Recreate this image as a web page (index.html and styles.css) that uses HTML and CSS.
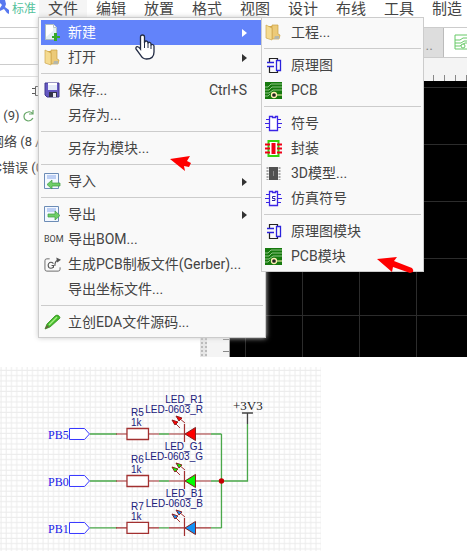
FILE: index.html
```html
<!DOCTYPE html>
<html lang="zh-CN">
<head>
<meta charset="utf-8">
<title>立创EDA</title>
<link rel="stylesheet" href="styles.css">
</head>
<body>
<svg class="defs" aria-hidden="true">
  <defs>
    <symbol id="i-new" viewBox="0 0 17 17">
      <path d="M1.500 .5h8l3 3v12h-11z" fill="#e4eff2" stroke="#aebdc2"/><path d="M2 1h7v6L2 13z" fill="#fff"/><path d="M9.500 .5v3h3" fill="#fff" stroke="#b9c5c9"/>
      <path d="M10 9h3v3h3v2h-3v3h-3v-3H8v-2h2z" fill="#35a927"/>
    </symbol>
    <symbol id="i-folder" viewBox="0 0 17 17">
      <path d="M1 2h8v12H1z" fill="#d6a64b"/><path d="M7 1h6v9l2 1-1 4H7z" fill="#ecca78" stroke="#caa044" stroke-width=".7"/><path d="M1 1l6 3v12l-6-2z" fill="#f5db91" stroke="#cda84f" stroke-width=".7"/><path d="M10 12h4v3h-5z" fill="#b5b7aa"/>
    </symbol>
    <symbol id="i-save" viewBox="0 0 17 17">
      <path d="M1 1h14v14H3l-2-2z" fill="#6558c2" stroke="#41388e"/><path d="M4 1h9v7H4z" fill="#e4eaf8"/><path d="M4 1h9v2H4z" fill="#fff"/><path d="M5 10h8v5H5z" fill="#343449"/><path d="M9 11h3v4H9z" fill="#e9e9f2"/>
    </symbol>
    <symbol id="i-import" viewBox="0 0 17 17">
      <path d="M.5.5h14v15H.5z" fill="#f3f8ff" stroke="#6c8cb6"/><path d="M3 3h9M3 5h9" stroke="#86a6e9"/><path d="M3 11.500l5-4.500v3h8v3H8v3z" fill="#6fce68" stroke="#3e9c40" stroke-width=".7"/>
    </symbol>
    <symbol id="i-export" viewBox="0 0 17 17">
      <path d="M.5.5h14v15H.5z" fill="#f3f8ff" stroke="#6c8cb6"/><path d="M3 3h9M3 5h9" stroke="#86a6e9"/><path d="M16 9.500L11 5v3H4v3h7v3z" fill="#6fce68" stroke="#3e9c40" stroke-width=".7"/>
    </symbol>
    <symbol id="i-gerber" viewBox="0 0 18 17">
      <path d="M6 2.500H3Q1 2.500 1 4.500v9q0 2 2 2h12q2 0 2-2v-2" fill="none" stroke="#666"/><path d="M10 7.500Q8 5.500 6 6.500 3.500 8 5 11.500q2 2 5 0V9.500H8M11.500 10q0-5 3-6" fill="none" stroke="#555" stroke-width="1.200"/><path d="M13 1l5 2.500-4 3z" fill="#555"/>
    </symbol>
    <symbol id="i-pencil" viewBox="0 0 17 17">
      <path d="M1 15l2-5 8-8q2-2 4 0t0 3l-9 8z" fill="#45bd2b" stroke="#338d20" stroke-width=".8"/><path d="M5 11l8-8" stroke="#a5ed83" stroke-width="1.500"/><path d="M1 15l2-4 2 2z" fill="#686040"/>
    </symbol>
    <symbol id="i-sch" viewBox="0 0 17 17">
      <path d="M4.500 5V1.500h8V3M4.500 10v5.500h8V14" fill="none" stroke="#222" stroke-width="1.200"/><path d="M2 5.500h7M2 9.500h7M11.500 3.500h4v10h-4z" fill="none" stroke="#2b22dc" stroke-width="1.300"/>
    </symbol>
    <symbol id="i-pcb" viewBox="0 0 17 17">
      <path d="M0 0h17v17H0z" fill="#16790e"/><path d="M0 5h3l3-3h11M0 8h4l3-3h10M0 11h4l4-3h9M0 14h3l2-2" fill="none" stroke="#a9d5a0" stroke-width=".8"/><circle cx="9" cy="13" r="2.500" fill="#222" stroke="#fff3b4" stroke-width="1.300"/><path d="M12 13h5" stroke="#fff3b4"/>
    </symbol>
    <symbol id="i-sym" viewBox="0 0 17 17">
      <path d="M4.500 1.500h3v1h3v-1h2v14h-8z" fill="#fff" stroke="#3b25e6" stroke-width="1.300"/><path d="M1 4.500h4M0 8.500h5M1 12.500h4M12 4.500h4M12 8.500h5M12 12.500h4" stroke="#3b25e6" stroke-width="1.200"/>
    </symbol>
    <symbol id="i-sim" viewBox="0 0 17 17">
      <use href="#i-sym" width="17" height="17"/><path d="M10.500 6.500h-3v2h2.500v2H7" fill="none" stroke="#2b22a8"/>
    </symbol>
    <symbol id="i-foot" viewBox="0 0 17 17">
      <path d="M3.500 1h10v15h-10z" fill="#fff" stroke="#35d210" stroke-width="2"/><path d="M6.500 3h4v11h-4z" fill="#f00018"/><path d="M0 4.500h5M0 8.500h5M0 12.500h5M12 4.500h5M12 8.500h5M12 12.500h5" stroke="#f00018" stroke-width="2"/>
    </symbol>
    <symbol id="i-3d" viewBox="0 0 17 17">
      <path d="M2.500 2v13M14.500 2v13" stroke="#aaa" stroke-width="2" stroke-dasharray="2 1"/><path d="M4 2h9v13H4z" fill="#505050"/><path d="M8.500 6v5" stroke="#888"/>
    </symbol>
    <g id="branch">
      <path d="M69.500-5.500h15l5 5.500-5 5.500h-15z" fill="#fff" stroke="#3535ff"/>
      <path d="M90 0h27M159 0h10M211 0h10.500" stroke="#4aa84a" stroke-width="1.300"/>
      <path d="M116 0h11M148 0h11M169 0h16M196 0h15M184.500-10V8" stroke="#a23030" stroke-width="1.200"/>
      <path d="M127-5.500h21.500v11H127z" fill="#fff" stroke="#a23030" stroke-width="1.300"/>
      <path d="M185 0l10.500-6.500v13z" stroke="#802020"/>
      <path d="M185-11l-6-5M180-6l-5-5" stroke="#a23030"/>
      <path d="M176-18l6 2-3 3zM172-14l6 2-3 3z" stroke="#8c2020"/>
    </g>
    <pattern id="grid" width="5.250" height="5.250" patternUnits="userSpaceOnUse"><path d="M1 0v5.250M0 3h5.250" stroke="#ececec" stroke-width="1"/></pattern>
  </defs>
</svg>

<main class="app">
  <nav class="menubar" aria-label="主菜单">
    <span class="brand"><svg class="logo" viewBox="0 0 9 15" aria-hidden="true"><path d="M0 0h5l1 4-1 3 4 3v4l-2-1-3-4-4 2V8l2-3-2-2z" fill="#5878ef"/></svg>标准</span>
    <button class="top open">文件</button><button class="top">编辑</button><button class="top">放置</button><button class="top">格式</button><button class="top">视图</button><button class="top">设计</button><button class="top">布线</button><button class="top">工具</button><button class="top">制造</button>
  </nav>

  <div class="workspace">
    <aside class="side">
      <div class="toolbar"></div>
      <input class="filter" type="text" aria-label="筛选">
      <div class="sidehead"><svg width="8" height="12" viewBox="0 0 8 12" aria-hidden="true"><path d="M7 1.500H3.500v9H7M0 3.500h3M0 8.500h3" stroke="#555" fill="none"/></svg></div>
      <ul class="tree">
        <li class="parts">元件 (9) <svg width="12" height="12" viewBox="0 0 12 12" aria-hidden="true"><path d="M10 4Q8 1 5 2 1 3 1 6.500T5 11q3 0 5-3M10 0v4H6" fill="none" stroke="#65a565" stroke-width="1.200"/></svg></li>
        <li class="nets">网络 (8 / 8)</li>
        <li class="drc">DRC错误 (0)</li>
      </ul>
    </aside>
    <div class="splitter"></div>
    <section class="editor">
      <div class="toolbar"></div>
      <div class="tabs"><span class="tab">..</span><span class="tab current"><svg width="24" height="16" viewBox="0 0 24 16" aria-hidden="true"><path d="M1 1h23M1 1v14h23M1 6h5l3-2h15M1 9h6l3-2h14M1 12h5l5-3h13" fill="none" stroke="#66c966"/><circle cx="9" cy="12" r="2" fill="#fff" stroke="#66c966"/></svg></span></div>
      <div class="hruler"></div>
      <div class="vruler"></div>
      <div class="board"></div>
    </section>
  </div>

  <ul class="menu file">
    <li><button class="active"><svg class="icon"><use href="#i-new"/></svg>新建<i class="more"></i></button></li>
    <li><button><svg class="icon"><use href="#i-folder"/></svg>打开<i class="more"></i></button></li>
    <li class="sep"></li>
    <li><button><svg class="icon"><use href="#i-save"/></svg>保存...<kbd>Ctrl+S</kbd></button></li>
    <li><button><span class="icon"></span>另存为...</button></li>
    <li class="sep"></li>
    <li><button><span class="icon"></span>另存为模块...</button></li>
    <li class="sep"></li>
    <li><button><svg class="icon"><use href="#i-import"/></svg>导入<i class="more"></i></button></li>
    <li class="sep"></li>
    <li><button><svg class="icon"><use href="#i-export"/></svg>导出<i class="more"></i></button></li>
    <li><button><span class="icon bom">BOM</span>导出BOM...</button></li>
    <li><button><svg class="icon"><use href="#i-gerber"/></svg>生成PCB制板文件(Gerber)...</button></li>
    <li><button><span class="icon"></span>导出坐标文件...</button></li>
    <li class="sep"></li>
    <li><button><svg class="icon"><use href="#i-pencil"/></svg>立创EDA文件源码...</button></li>
  </ul>

  <ul class="menu sub">
    <li><button><svg class="icon"><use href="#i-folder"/></svg>工程...</button></li>
    <li class="sep"></li>
    <li><button><svg class="icon"><use href="#i-sch"/></svg>原理图</button></li>
    <li><button><svg class="icon"><use href="#i-pcb"/></svg>PCB</button></li>
    <li class="sep"></li>
    <li><button><svg class="icon"><use href="#i-sym"/></svg>符号</button></li>
    <li><button><svg class="icon"><use href="#i-foot"/></svg>封装</button></li>
    <li><button><svg class="icon"><use href="#i-3d"/></svg>3D模型...</button></li>
    <li><button><svg class="icon"><use href="#i-sim"/></svg>仿真符号</button></li>
    <li class="sep"></li>
    <li><button><svg class="icon"><use href="#i-sch"/></svg>原理图模块</button></li>
    <li><button><svg class="icon"><use href="#i-pcb"/></svg>PCB模块</button></li>
  </ul>

  <svg class="cursor" viewBox="0 0 20 26" aria-hidden="true"><path d="M5.500 15V3q0-2 2-2t2 2v6q0-2 1.700-2t1.800 2v1q0-2 1.500-1.700T16 10v2q0-2 1.500-1.500T19 12v6q0 7-7.500 7-4 0-6-4L1 15q-.5-2 1-2.300t3.500 2.300z" fill="#fff" stroke="#222b44" stroke-width="1.300"/><path d="M9.500 9v5M13 10v4M16 12v3" stroke="#222b44"/></svg>
  <svg class="mark first" viewBox="0 0 21 16" aria-hidden="true"><path d="M0 3l20-3-3 5 4 2-2 4-5-1 1 5z" fill="#fe0000"/></svg>
  <svg class="mark second" viewBox="0 0 37 16" aria-hidden="true"><path d="M0 2l20-2-3 4 18 7q2 2 1 4l-3 1-17-6-1 5z" fill="#fe0000"/></svg>
</main>

<figure class="schematic">
  <svg viewBox="0 367 321 184" role="img" aria-label="LED 原理图">
    <rect x="0" y="367" width="321" height="184" fill="url(#grid)"/>
    <use href="#branch" y="434" fill="#f00"/>
    <use href="#branch" y="481" fill="#0f0"/>
    <use href="#branch" y="528" fill="#1492f5"/>
    <path d="M221.500 434v94M221.500 481h26v-57" fill="none" stroke="#4aa84a" stroke-width="1.300"/>
    <path d="M247.500 424v-11M242 413h11" stroke="#444" stroke-width="1.300"/>
    <circle cx="221.500" cy="481" r="2.700" fill="#c40000"/>
    <g class="port"><text x="48" y="439">PB5</text><text x="48" y="486">PB0</text><text x="48" y="533">PB1</text></g>
    <text class="power" x="233" y="410">+3V3</text>
    <g class="part">
      <text x="131" y="416">R5</text><text x="131" y="426">1k</text>
      <text x="131" y="463">R6</text><text x="131" y="473">1k</text>
      <text x="131" y="510">R7</text><text x="131" y="520">1k</text>
    </g>
    <g class="part end">
      <text x="203" y="403">LED_R1</text><text x="203" y="413">LED-0603_R</text>
      <text x="203" y="450">LED_G1</text><text x="203" y="460">LED-0603_G</text>
      <text x="203" y="497">LED_B1</text><text x="203" y="507">LED-0603_B</text>
    </g>
  </svg>
</figure>
</body>
</html>
```
FILE: styles.css
```css
* { box-sizing: border-box; }
body {
  margin: 0;
  background: #fff;
  color: #444;
  font: 14px/25px Roboto, "Noto Sans CJK SC", sans-serif;
}
ul { list-style: none; margin: 0; padding: 0; }
button {
  border: 0;
  padding: 0;
  background: none;
  color: inherit;
  font: inherit;
  text-align: left;
  white-space: nowrap;
}
.defs { position: absolute; width: 0; height: 0; }

.app {
  position: relative;
  margin-right: 5px;
  display: flex;
  flex-direction: column;
  overflow: hidden;
}
.menubar { display: flex; height: 17px; font-size: 15px; line-height: 16px; }
.brand { display: flex; flex: 0 0 39px; gap: 3px; color: #55c29c; font-size: 12px; line-height: 18px; white-space: nowrap; }
.logo { width: 9px; height: 15px; flex: none; }
.top { flex: 0 0 48px; text-align: center; }
.top.open { background: #f5f5f5; }

.workspace { display: flex; min-height: 340px; }
.toolbar { height: 11px; border-bottom: 1px solid #ccc; }
.side { flex: 0 0 200px; overflow: hidden; font-size: 13px; }
.filter {
  display: block;
  width: 100%;
  height: 27px;
  margin: 10px 0 11px;
  border: 1px solid #ccc;
  border-left: 0;
}
.sidehead { display: flex; height: 27px; padding: 8px 0 0 32px; border-top: 1px solid #ddd; }
.tree { line-height: 26px; color: #444; white-space: nowrap; }
.tree svg { vertical-align: -2px; }
.parts { margin-left: -26px; }
.nets { margin-left: -9px; }
.drc { margin-left: -23px; }
.splitter { flex: 0 0 7px; background: radial-gradient(#bbb 1px, #e6e6e6 1px) 0 0 / 4px 4px; }

.editor {
  flex: 1;
  display: grid;
  grid-template-columns: 23px 1fr;
  grid-template-rows: 11px 30px 23px 1fr;
}
.editor .toolbar, .tabs, .hruler { grid-column: 1 / -1; }
.tabs { display: flex; justify-content: flex-end; background: #ddd; border-bottom: 1px solid #ccc; }
.tab { padding: 5px 10px; color: #888; }
.current { flex: 0 0 24px; padding: 6px 0 0 10px; overflow: hidden; background: #fff; border-left: 1px solid #bbb; line-height: 16px; }
.hruler {
  background: repeating-linear-gradient(90deg, #888 0 1px, transparent 1px 11px) 6px 100% / 100% 6px no-repeat #f4f4f4;
}
.vruler {
  background: repeating-linear-gradient(#888 0 1px, transparent 1px 12px) 100% 6px / 6px 100% no-repeat #f4f4f4;
  border-right: 1px solid #999;
}
.board {
  background:
    linear-gradient(#2c2c2c 1px, transparent 1px) 0 6px / 57px 57px,
    linear-gradient(90deg, #2c2c2c 1px, transparent 1px) 15px 0 / 57px 57px,
    #000;
}

.menu {
  position: absolute;
  top: 17px;
  padding: 2px;
  background: #f9f9f9;
  border: 1px solid #ccc;
  box-shadow: 0 0 5px #ccc;
}
.file { left: 38px; width: 228px; }
.sub { left: 261px; width: 163px; box-shadow: none; }
.menu li { height: 25px; }
.menu .sep { height: 8px; padding-top: 3px; }
.sep::before { content: ""; display: block; height: 1px; background: #ccc; }
.menu button { display: flex; align-items: center; width: 100%; height: 25px; padding: 0 16px 0 3px; }
.sub button { padding-left: 1px; }
.menu .icon { flex: none; width: 17px; height: 17px; margin-right: 7px; }
.sub .icon { margin-right: 9px; }
.menu .bom { font-size: 9px; line-height: 17px; }
.active.active { background: #6283fa; color: #fff; }
.more { margin-left: auto; border: 4px solid transparent; border-left: 5px solid #333; border-right: 0; }
.active .more { border-left-color: #fff; }
kbd { margin-left: auto; font: inherit; }

.cursor { position: absolute; left: 135px; top: 34px; width: 20px; height: 26px; }
.mark { position: absolute; }
.first { left: 170px; top: 156px; width: 21px; height: 16px; }
.second { left: 377px; top: 257px; width: 37px; height: 16px; }

.schematic { width: 68%; margin: 10px 0 0; }
.schematic svg { display: block; width: 100%; }
.port { font: 12px "Liberation Serif", serif; fill: #2020e8; }
.power { font: 13px "Liberation Serif", serif; fill: #222; }
.part { font: 10px "Liberation Sans", sans-serif; fill: #20207c; }
.end { text-anchor: end; }
```
